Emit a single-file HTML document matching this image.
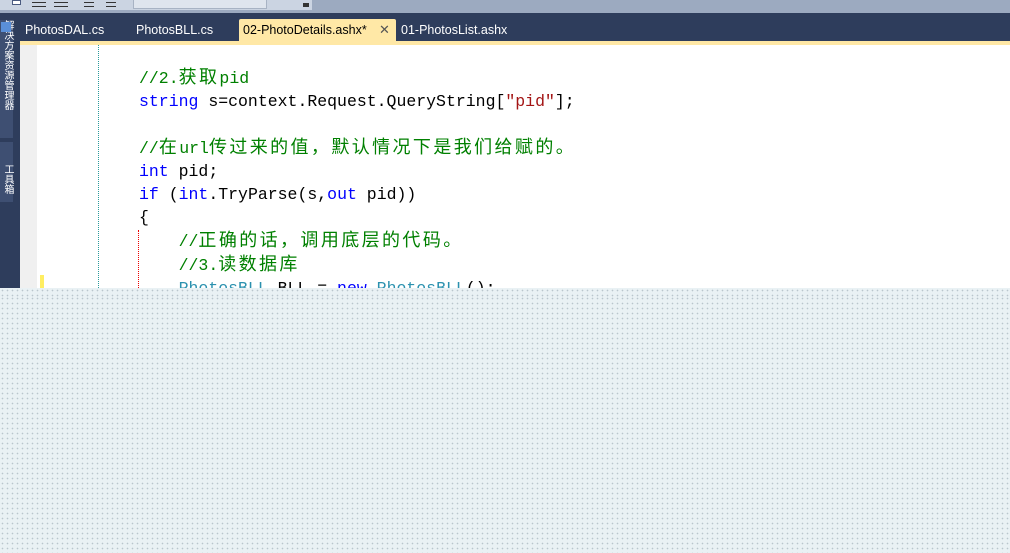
<!DOCTYPE html>
<html><head><meta charset="utf-8"><style>
*{margin:0;padding:0;box-sizing:border-box}
body{width:1010px;height:553px;overflow:hidden;position:relative;background:#2e3d5c;font-family:"Liberation Sans","Noto Sans CJK SC",sans-serif}
.a{position:absolute}
.tab{position:absolute;top:19px;height:22px;line-height:22px;font-size:12.5px;color:#fff}
.code{position:absolute;left:139px;top:66px;font-family:"Liberation Mono","Noto Sans CJK SC",monospace;font-size:16.5px;line-height:23px;color:#000;white-space:pre}
.z{font-family:"Noto Sans CJK SC",sans-serif;font-size:18px;letter-spacing:2.4px;line-height:20px}
.c{color:#008000}.k{color:#0000ff}.t{color:#2b91af}.s{color:#a31515}
.dots{background-color:#e9f1f4;background-image:radial-gradient(#b9c6cd 0.7px,transparent 0.9px);background-size:5px 5px}
</style></head><body>
<div class="a" style="left:0;top:0;width:1010px;height:13px;background:#9caac0"></div>
<div class="a" style="left:0;top:0;width:312px;height:10px;background:#cbd4e2"></div>
<div class="a" style="left:133px;top:0;width:134px;height:9px;background:#dfe5ee;border:1px solid #a8b3c4;border-top:none"></div>
<div class="a" style="left:12px;top:0;width:9px;height:5px;border:1px solid #4a5a80;background:#fff"></div>
<div class="a" style="left:32px;top:2px;width:14px;height:5px;border-top:1px solid #333;border-bottom:1px solid #333"></div>
<div class="a" style="left:54px;top:2px;width:14px;height:5px;border-top:1px solid #333;border-bottom:1px solid #333"></div>
<div class="a" style="left:84px;top:2px;width:10px;height:5px;border-top:1px solid #333;border-bottom:1px solid #333"></div>
<div class="a" style="left:106px;top:2px;width:10px;height:5px;border-top:1px solid #333;border-bottom:1px solid #333"></div>
<div class="a" style="left:303px;top:3px;width:6px;height:4px;background:#333"></div>
<div class="a" style="left:0;top:20px;width:13px;height:118px;background:#3e4f72;color:#fff;font-size:10px;line-height:11px;writing-mode:vertical-rl">解决方案资源管理器</div>
<div class="a" style="left:0;top:142px;width:13px;height:60px;background:#3e4f72;color:#fff;font-size:10px;line-height:11px;padding-top:22px;writing-mode:vertical-rl">工具箱</div>
<div class="a" style="left:1px;top:22px;width:10px;height:10px;background:#5a8fd8"></div>
<div class="tab" style="left:25px">PhotosDAL.cs</div>
<div class="tab" style="left:136px">PhotosBLL.cs</div>
<div class="tab" style="left:239px;width:157px;background:#ffe8a6;color:#000;padding-left:4px;border-radius:2px 2px 0 0">02-PhotoDetails.ashx*<span style="position:absolute;left:140px;color:#555;font-size:13px">✕</span></div>
<div class="tab" style="left:401px">01-PhotosList.ashx</div>
<div class="a" style="left:20px;top:41px;width:990px;height:4px;background:#ffe8a6"></div>
<div class="a" style="left:20px;top:45px;width:990px;height:251px;background:#fff"></div>
<div class="a" style="left:20px;top:45px;width:17px;height:251px;background:#f0f0f0"></div>
<div class="a" style="left:40px;top:275px;width:4px;height:21px;background:#ffee62"></div>
<div class="a" style="left:98px;top:45px;height:251px;border-left:1px dotted #2a9a9a"></div>
<div class="a" style="left:138px;top:230px;height:66px;border-left:1px dotted #e00"></div>
<div class="code"><span class="c">//2.<span class="z">获取</span>pid</span>
<span class="k">string</span> s=context.Request.QueryString[<span class="s">"pid"</span>];

<span class="c">//<span class="z">在</span>url<span class="z">传过来的值，默认情况下是我们给赋的。</span></span>
<span class="k">int</span> pid;
<span class="k">if</span> (<span class="k">int</span>.TryParse(s,<span class="k">out</span> pid))
{
    <span class="c">//<span class="z">正确的话，调用底层的代码。</span></span>
    <span class="c">//3.<span class="z">读数据库</span></span>
    <span class="t">PhotosBLL</span> BLL = <span class="k">new</span> <span class="t">PhotosBLL</span>();</div>
<div class="a dots" style="left:0;top:296px;width:1010px;height:257px"></div>
<div class="a dots" style="left:0;top:288px;width:1010px;height:9px"></div>
</body></html>
